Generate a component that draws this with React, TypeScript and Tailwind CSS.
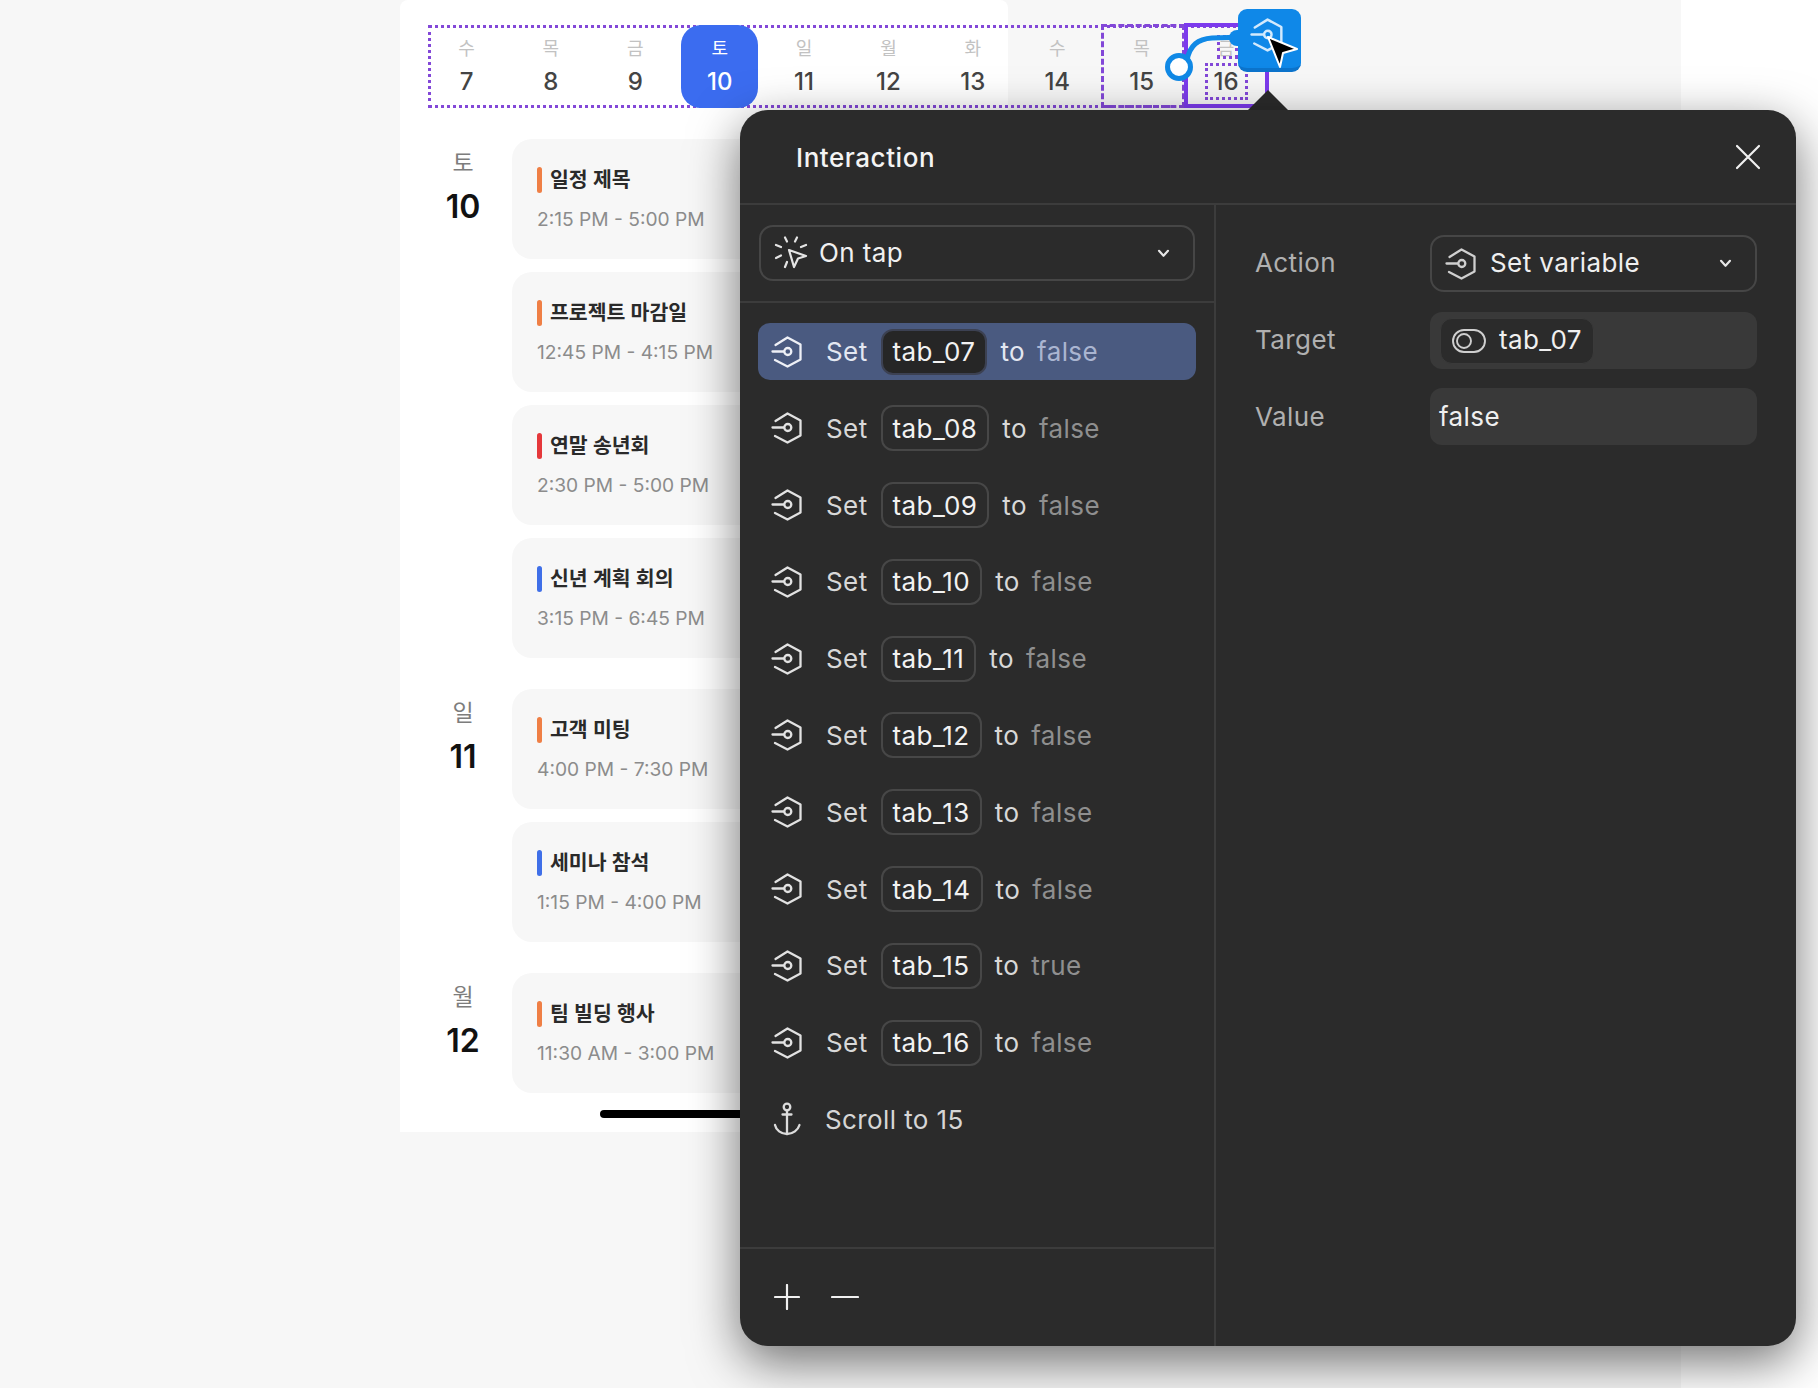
import React from "react";

const FONT = "font-['Inter','Noto_Sans_CJK_KR',sans-serif]";

function SetIcon({ className = "", stroke = "currentColor" }: { className?: string; stroke?: string }) {
  return (
    <svg viewBox="0 0 32 32" fill="none" stroke={stroke} strokeWidth="2.3" strokeLinecap="round" strokeLinejoin="round" className={className}>
      <path d="M4.5 9 L16.5 1.5 L29.5 8.5 V23.5 L16.5 30.5 L4 24" />
      <path d="M1.5 15.5 H13" />
      <circle cx="16.8" cy="15.5" r="3.5" />
    </svg>
  );
}

function TapIcon() {
  return (
    <svg viewBox="0 0 34 34" fill="none" stroke="#e4e4e4" strokeWidth="2.2" strokeLinecap="round" strokeLinejoin="round" className="w-[34px] h-[34px] shrink-0">
      <path d="M15 14 L32 20 L24 22.5 L20 31 Z" />
      <path d="M11 1.5 L13 5.5 M23 1.5 L21 5.5 M2 9 L7 11 M32 9 L27 11 M2 22 L7 19.5 M11 31 L13 26" />
    </svg>
  );
}

function Chevron() {
  return (
    <svg viewBox="0 0 14 10" fill="none" stroke="#e6e6e6" strokeWidth="2.4" strokeLinecap="round" strokeLinejoin="round" className="w-[13px] h-[9px] shrink-0">
      <path d="M2 2 L7 7.5 L12 2" />
    </svg>
  );
}

function ToggleIcon() {
  return (
    <svg viewBox="0 0 34 24" fill="none" stroke="#cfcfcf" strokeWidth="1.9" className="w-[34px] h-[24px] shrink-0">
      <rect x="1" y="1" width="32" height="22" rx="11" />
      <circle cx="12" cy="12" r="7" />
    </svg>
  );
}

function AnchorIcon() {
  return (
    <svg viewBox="0 0 28 34" fill="none" stroke="#dcdcdc" strokeWidth="2.3" strokeLinecap="round" strokeLinejoin="round" className="w-[28px] h-[34px] shrink-0">
      <circle cx="14" cy="5" r="3.3" />
      <path d="M14 8.5 V32" />
      <path d="M9.5 12.5 H18.5" />
      <path d="M2 23 C3 28 8 32 14 32 C20 32 25 28 26.5 23" />
    </svg>
  );
}

const days = [
  ["수", "7"], ["목", "8"], ["금", "9"], ["토", "10"], ["일", "11"],
  ["월", "12"], ["화", "13"], ["수", "14"], ["목", "15"], ["금", "16"],
];

const groups = [
  {
    day: "토", num: "10",
    events: [
      { t: "일정 제목", time: "2:15 PM - 5:00 PM", c: "bg-[#ef7f45]" },
      { t: "프로젝트 마감일", time: "12:45 PM - 4:15 PM", c: "bg-[#ef7f45]" },
      { t: "연말 송년회", time: "2:30 PM - 5:00 PM", c: "bg-[#e5383b]" },
      { t: "신년 계획 회의", time: "3:15 PM - 6:45 PM", c: "bg-[#3f6fe8]" },
    ],
  },
  {
    day: "일", num: "11",
    events: [
      { t: "고객 미팅", time: "4:00 PM - 7:30 PM", c: "bg-[#ef7f45]" },
      { t: "세미나 참석", time: "1:15 PM - 4:00 PM", c: "bg-[#3f6fe8]" },
    ],
  },
  {
    day: "월", num: "12",
    events: [{ t: "팀 빌딩 행사", time: "11:30 AM - 3:00 PM", c: "bg-[#ef7f45]" }],
  },
];

const rows = [
  ["tab_07", "false"], ["tab_08", "false"], ["tab_09", "false"], ["tab_10", "false"], ["tab_11", "false"],
  ["tab_12", "false"], ["tab_13", "false"], ["tab_14", "false"], ["tab_15", "true"], ["tab_16", "false"],
];

function Row({ name, value, active }: { name: string; value: string; active: boolean }) {
  return (
    <div className={`h-[57px] flex items-center pl-[13px] rounded-[12px] ${active ? "bg-[#4a5a80]" : ""}`}>
      <SetIcon className={`w-[32px] h-[32px] shrink-0 mr-[23px] ${active ? "text-[#eef0f6]" : "text-[#e2e2e2]"}`} />
      <span className={`mr-[13px] ${active ? "text-[#e3e7f1]" : "text-[#d8d8d8]"}`}>Set</span>
      <span className={`h-[46px] px-[10px] mr-[13px] flex items-center rounded-[12px] border-2 text-[#f2f2f2] ${active ? "bg-[#262626] border-[#3c4152]" : "border-[#474747]"}`}>{name}</span>
      <span className={`mr-[12px] ${active ? "text-[#e3e7f1]" : "text-[#d8d8d8]"}`}>to</span>
      <span className={active ? "text-[#aab5d1]" : "text-[#8f8f8f]"}>{value}</span>
    </div>
  );
}

export default function App() {
  return (
    <div className={`relative w-[1818px] h-[1388px] overflow-hidden bg-white ${FONT}`}>
      {/* canvas background */}
      <div className="w-[1681px] h-[1388px] bg-[#f7f7f7]">
        {/* phone */}
        <div className="ml-[400px] w-[608px] h-[1132px] bg-white rounded-t-[8px] flex flex-col">
          <div className="mt-[25px] ml-[28px] w-[840px] h-[83px] shrink-0 border-[3px] border-dotted border-[#8348d8]">
            <div className="-m-[3px] h-[83px] flex gap-[7.4px]">
              {days.map(([d, n], i) => (
                <div
                  key={i}
                  className={`w-[77px] shrink-0 flex flex-col items-center rounded-[20px] pt-[11px] ${n === "10" ? "bg-[#3b6cf0]" : ""}`}
                >
                  <span className={`text-[18px] leading-[26px] ${n === "10" ? "text-white" : "text-[#c2c2c2]"}`}>{d}</span>
                  <span className={`text-[24px] leading-[34px] mt-[3px] font-medium ${n === "10" ? "text-white" : "text-[#444444]"}`}>{n}</span>
                </div>
              ))}
            </div>
          </div>

          <div className="mt-[31px] flex flex-col gap-[31px]">
            {groups.map((g) => (
              <div key={g.num} className="flex">
                <div className="w-[112px] pl-[14px] pt-[8px] flex flex-col items-center shrink-0">
                  <span className="text-[23px] leading-[32px] text-[#7d7d7d]">{g.day}</span>
                  <span className="text-[32px] leading-[40px] mt-[8px] font-semibold text-[#111111]">{g.num}</span>
                </div>
                <div className="flex-1 flex flex-col gap-[13px] pr-[12px]">
                  {g.events.map((e) => (
                    <div key={e.t} className="h-[120px] rounded-[20px] bg-[#f7f7f7] pl-[25px] pt-[28px]">
                      <div className="flex items-center gap-[8px] h-[26px]">
                        <span className={`w-[5px] h-[26px] rounded-full ${e.c}`} />
                        <span className="text-[20.5px] font-semibold text-[#2a2a2a]">{e.t}</span>
                      </div>
                      <div className="mt-[12px] text-[19.2px] leading-[28px] text-[#8c8c8c]">{e.time}</div>
                    </div>
                  ))}
                </div>
              </div>
            ))}
          </div>

          <div className="mt-[17px] mx-auto w-[208px] h-[8px] rounded-full bg-black" />
        </div>
      </div>

      {/* selection outlines over the tab strip */}
      <div className="absolute left-[1101px] top-[24px] w-[84px] h-[84px] border-[3px] border-dashed border-[#8348d8]" />
      <div className="absolute left-[1184px] top-[23px] w-[85px] h-[85px] border-[4px] border-[#7c3aed]" />
      <div className="absolute left-[1217px] top-[35px] w-[21px] h-[24px] border-[3px] border-dotted border-[#8348d8]" />
      <div className="absolute left-[1205px] top-[63px] w-[43px] h-[37px] border-[3px] border-dotted border-[#8348d8]" />

      {/* connector */}
      <svg className="absolute left-[1160px] top-[20px] w-[90px] h-[65px]" viewBox="0 0 90 65" fill="none">
        <path d="M27 40 C30 25 38 19 52 18 L85 17" stroke="#1089e6" strokeWidth="5" strokeLinecap="round" />
        <circle cx="19" cy="47" r="11.5" fill="#ffffff" stroke="#1089e6" strokeWidth="5" />
      </svg>

      {/* blue badge */}
      <div className="absolute left-[1238px] top-[9px] w-[63px] h-[63px] rounded-[9px] bg-[#0f88e8] border-b-[4px] border-[#0c74cc] flex items-center justify-center">
        <SetIcon className="w-[34px] h-[36px] text-[#d3eafd] -mt-[8px] -ml-[6px]" />
      </div>
      <div className="absolute left-[1229px] top-[30px] w-[12px] h-[16px] rounded-l-[8px] bg-[#0f88e8]" />
      <svg className="absolute left-[1264px] top-[33px] w-[38px] h-[38px]" viewBox="0 0 38 38">
        <path d="M4 4 L33 16 L19 20 L16 34 Z" fill="#000000" stroke="#ffffff" strokeWidth="2" strokeLinejoin="round" />
      </svg>

      {/* popover arrow */}
      <svg className="absolute left-[1246px] top-[90px] w-[44px] h-[22px]" viewBox="0 0 44 22">
        <path d="M22 0 L44 22 H0 Z" fill="#2b2b2b" />
      </svg>

      {/* popover */}
      <div className="absolute left-[740px] top-[110px] w-[1056px] h-[1236px] rounded-[28px] bg-[#2b2b2b] shadow-[0_16px_50px_rgba(0,0,0,0.55)] flex flex-col text-[26px] tracking-[0.4px] overflow-hidden">
        <div className="h-[95px] shrink-0 border-b-2 border-[#3c3c3c] flex items-center justify-between pl-[56px] pr-[35px]">
          <span className="text-[26px] tracking-[0.55px] font-medium text-[#f4f4f4] pt-[2px]">Interaction</span>
          <svg viewBox="0 0 26 26" fill="none" stroke="#f0f0f0" strokeWidth="2.2" strokeLinecap="round" className="w-[26px] h-[26px]">
            <path d="M2 2 L24 24 M24 2 L2 24" />
          </svg>
        </div>

        <div className="flex-1 flex min-h-0">
          <div className="w-[476px] shrink-0 border-r-2 border-[#3c3c3c] flex flex-col">
            <div className="h-[98px] shrink-0 border-b-2 border-[#3c3c3c] px-[19px] pt-[20px]">
              <div className="h-[56px] rounded-[14px] border-2 border-[#464646] flex items-center pl-[13px] pr-[23px] gap-[11px] text-[#f0f0f0]">
                <TapIcon />
                <span className="flex-1 -mt-[2px]">On tap</span>
                <Chevron />
              </div>
            </div>
            <div className="flex-1 px-[18px] pt-[20px] flex flex-col gap-[19.8px]">
              {rows.map(([n, v], i) => (
                <Row key={n} name={n} value={v} active={i === 0} />
              ))}
              <div className="h-[57px] flex items-center pl-[15px] gap-[24px] text-[#d6d6d6]">
                <AnchorIcon />
                <span>Scroll to 15</span>
              </div>
            </div>
            <div className="h-[99px] shrink-0 border-t-2 border-[#3c3c3c] flex items-center pl-[34px] gap-[31px] pb-[2px]">
              <svg viewBox="0 0 26 26" fill="none" stroke="#f0f0f0" strokeWidth="2.2" strokeLinecap="round" className="w-[26px] h-[26px]">
                <path d="M13 1 V25 M1 13 H25" />
              </svg>
              <svg viewBox="0 0 28 26" fill="none" stroke="#f0f0f0" strokeWidth="2.2" strokeLinecap="round" className="w-[28px] h-[26px]">
                <path d="M1 13 H27" />
              </svg>
            </div>
          </div>

          <div className="flex-1 pl-[39px] pr-[39px] pt-[30px] flex flex-col gap-[20px]">
            <div className="h-[57px] flex items-center">
              <span className="w-[175px] shrink-0 -mt-[2px] text-[#b0b0b0]">Action</span>
              <div className="flex-1 h-full rounded-[14px] border-2 border-[#464646] flex items-center pl-[13px] pr-[23px] gap-[13px] text-[#efefef]">
                <SetIcon className="w-[32px] h-[32px] shrink-0 text-[#cfcfcf]" />
                <span className="flex-1 -mt-[2px]">Set variable</span>
                <Chevron />
              </div>
            </div>
            <div className="h-[57px] flex items-center">
              <span className="w-[175px] shrink-0 -mt-[2px] text-[#b0b0b0]">Target</span>
              <div className="flex-1 h-full rounded-[12px] bg-[#393939] flex items-center pl-[10px]">
                <div className="h-[46px] px-[11px] rounded-[12px] bg-[#2b2b2b] border border-[#3a3a3a] flex items-center gap-[13px] text-[#f0f0f0]">
                  <ToggleIcon />
                  <span className="-mt-[2px]">tab_07</span>
                </div>
              </div>
            </div>
            <div className="h-[57px] -mt-[1px] flex items-center">
              <span className="w-[175px] shrink-0 text-[#b0b0b0]">Value</span>
              <div className="flex-1 h-full rounded-[12px] bg-[#393939] flex items-center pl-[9px] text-[#efefef]">false</div>
            </div>
          </div>
        </div>
      </div>
    </div>
  );
}
